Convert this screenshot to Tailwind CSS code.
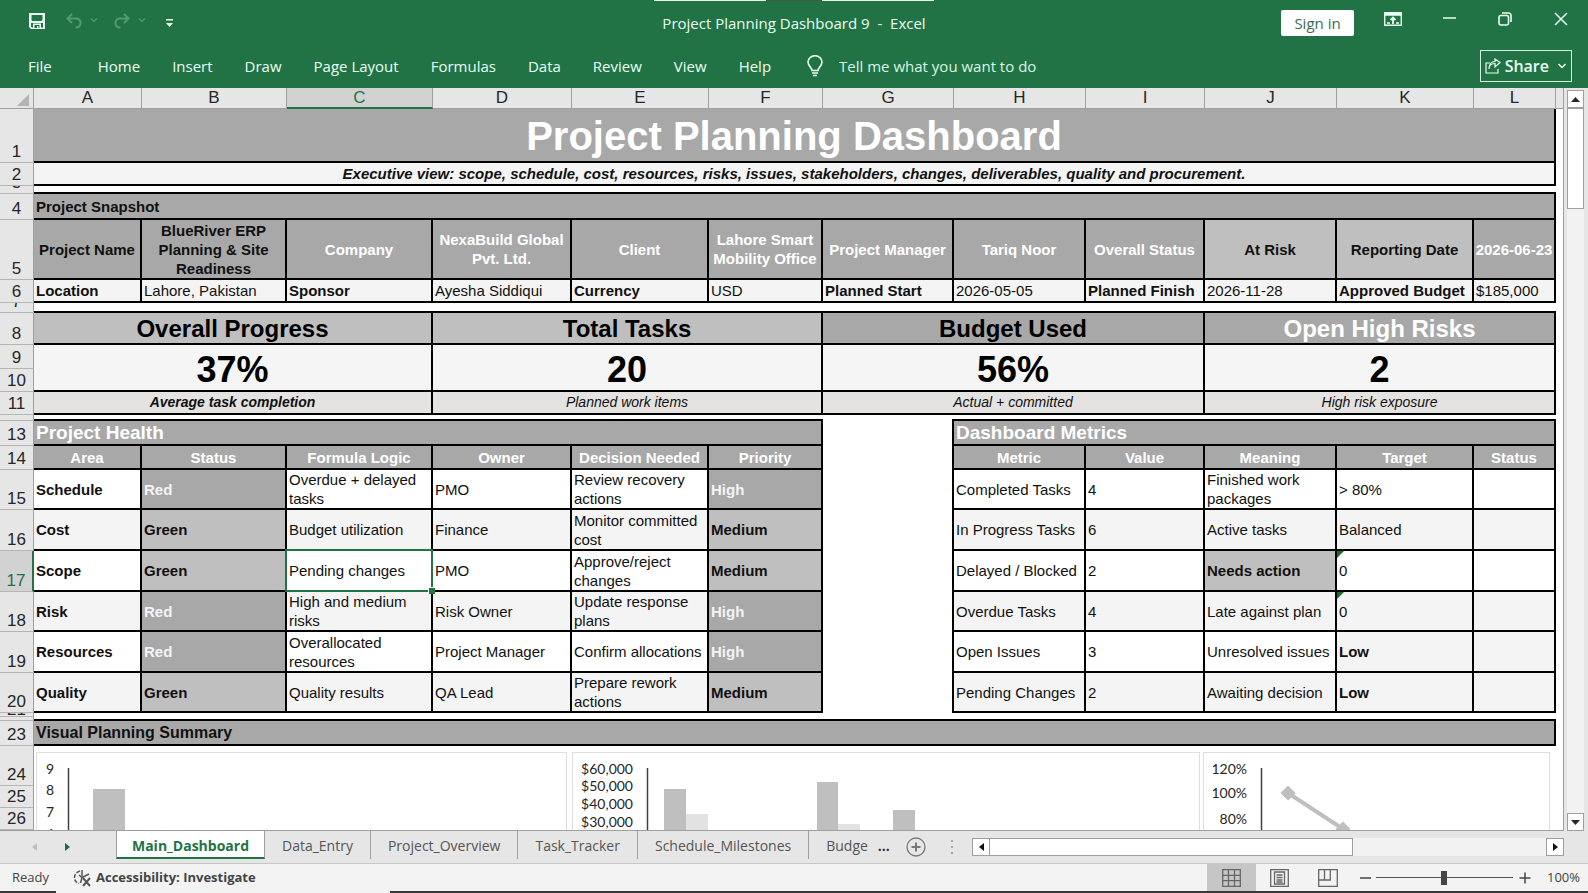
<!DOCTYPE html>
<html lang="en">
<head>
    <meta charset="UTF-8">
    <meta name="viewport" content="width=device-width, initial-scale=1.0">
    <title>Project Planning Dashboard 9 - Excel</title>
    <script src="https://cdn.jsdelivr.net/npm/@tailwindcss/browser@4"></script>
</head>
<body class="h-screen flex flex-col overflow-hidden bg-[#e6e6e6] font-['Open_Sans',sans-serif] text-[15px] text-[#262626]">

    <!-- Title bar + ribbon tabs -->
    <header class="relative shrink-0 bg-[#217346] text-[#e9fff2]">
        <div class="absolute top-0 left-1/2 -translate-x-1/2 flex h-px">
            <span class="w-28 bg-[#e9fff2]"></span>
            <span class="w-14 bg-[#3f5a4a]"></span>
            <span class="w-28 bg-[#e9fff2]"></span>
        </div>

        <div class="h-[46px] grid grid-cols-[1fr_auto_1fr] items-center">
            <div class="flex items-center pl-7">
                <button aria-label="Save" class="mr-5">
                    <svg class="w-[18px] h-[18px] -mt-1" viewBox="0 0 18 18" fill="currentColor" fill-rule="evenodd">
                        <path d="M1 1h16v16H3l-2-2zM3.500 3v5l1 1h9l1-1V3zM3 11v4l1 .5H5V11.500h8v4h2V11zM6.500 13v3h2.500v-2h1.500v2h1v-3z"/>
                    </svg>
                </button>
                <button aria-label="Undo" class="flex items-center gap-2 mr-4 text-[#4f9a70]">
                    <svg class="w-4 h-[18px] -mt-1" viewBox="0 0 16 18" fill="none" stroke="currentColor" stroke-width="2">
                        <path d="M6 2L1.500 6.500L6 11M2 6.500h7.500c3 0 5 1.800 5 4.500 0 2.500-1.800 4.500-5 4.500"/>
                    </svg>
                    <svg class="w-2 h-2 -mt-1.5" viewBox="0 0 8 8" fill="none" stroke="currentColor" stroke-width="1.300"><path d="M1 2.500l3 3 3-3"/></svg>
                </button>
                <button aria-label="Redo" class="flex items-center gap-2 mr-5 text-[#4f9a70]">
                    <svg class="w-4 h-[18px] -mt-1" viewBox="0 0 16 18" fill="none" stroke="currentColor" stroke-width="2">
                        <path d="M10 2l4.500 4.500L10 11M14 6.500H6.500c-3 0-5 1.800-5 4.500 0 2.500 1.800 4.500 5 4.500"/>
                    </svg>
                    <svg class="w-2 h-2 -mt-1.5" viewBox="0 0 8 8" fill="none" stroke="currentColor" stroke-width="1.300"><path d="M1 2.500l3 3 3-3"/></svg>
                </button>
                <button aria-label="Customize Quick Access Toolbar">
                    <svg class="w-[7px] h-2" viewBox="0 0 7 8" fill="currentColor"><path d="M0 0h7v1.500H0zM0 4h7L3.500 8z"/></svg>
                </button>
            </div>
            <h1 class="whitespace-pre">Project Planning Dashboard 9  -  Excel</h1>
            <div class="flex items-center justify-end pr-5">
                <button class="w-[73px] h-[26px] mr-[30px] rounded-xs bg-white text-[#3b6b53]">Sign in</button>
                <div class="flex items-center -mt-2">
                    <button aria-label="Ribbon Display Options" class="mr-[41px]">
                        <svg class="w-[18px] h-[14px]" viewBox="0 0 18 14" fill="none" stroke="currentColor" stroke-width="1.400">
                            <path d="M.7.7h16.600v12.600H.7zM.7 3h16.600"/>
                            <path d="M.7 2h16.600" stroke-width="2"/>
                            <path d="M9 12V5.500M6.500 8L9 5.500 11.500 8" stroke-width="1.800"/>
                            <path d="M3 11h3M12 11h3"/>
                        </svg>
                    </button>
                    <button aria-label="Minimize" class="mr-[42px]">
                        <svg class="w-[13px] h-[14px]" viewBox="0 0 13 14" stroke="currentColor" stroke-width="1.500"><path d="M0 6h13"/></svg>
                    </button>
                    <button aria-label="Restore" class="mr-[42px]">
                        <svg class="w-[14px] h-[14px]" viewBox="0 0 14 14" fill="none" stroke="currentColor" stroke-width="1.600">
                            <rect x="1" y="3.500" width="9.500" height="9.500" rx="2"/>
                            <path d="M4 1h6.500A2.500 2.500 0 0 1 13 3.500V10"/>
                        </svg>
                    </button>
                    <button aria-label="Close">
                        <svg class="w-[14px] h-[14px]" viewBox="0 0 14 14" stroke="currentColor" stroke-width="1.500"><path d="M1 1l12 12M13 1L1 13"/></svg>
                    </button>
                </div>
            </div>
        </div>

        <div class="h-[42px] flex items-center justify-between pl-7 pr-4 pb-0.5">
            <nav class="flex items-center gap-8">
                <button class="mr-3.5">File</button>
                <button>Home</button>
                <button>Insert</button>
                <button>Draw</button>
                <button>Page Layout</button>
                <button>Formulas</button>
                <button>Data</button>
                <button>Review</button>
                <button>View</button>
                <button>Help</button>
                <label class="flex items-center gap-4">
                    <svg class="ml-1 w-4 h-[22px]" viewBox="0 0 16 22" fill="none" stroke="currentColor" stroke-width="1.600">
                        <path d="M5 15.500c0-3-4-4.500-4-8.500a7 6.300 0 0 1 14 0c0 4-4 5.500-4 8.500z"/>
                        <path d="M5 18h6M6 20.500h4"/>
                    </svg>
                    <input type="text" aria-label="Tell me what you want to do" placeholder="Tell me what you want to do" class="w-56 outline-none placeholder:text-[#d8f5e4] placeholder:opacity-100">
                </label>
            </nav>
            <button class="flex items-center h-8 px-1 border border-[#d5f0e0] text-base font-semibold">
                <svg class="w-4 h-4" viewBox="0 0 16 16" fill="none" stroke="currentColor" stroke-width="1.200">
                    <path d="M5 5H1v10h12v-4"/>
                    <path d="M4 11c0-3.500 2.500-5.500 6-5.500V9l5-4.500L10 1v2.500C6 3.500 4 7 4 11z"/>
                </svg>
                <span class="mx-1">Share</span>
                <svg class="ml-1 w-2.5 h-2.5" viewBox="0 0 10 10" fill="none" stroke="currentColor" stroke-width="1.500"><path d="M1.500 3l3.500 3.500L8.500 3"/></svg>
            </button>
        </div>
    </header>

    <!-- Worksheet -->
    <main class="flex-1 min-h-0 flex overflow-hidden">
        <div class="flex-1 min-w-0 overflow-hidden border-r border-b border-[#9f9f9f] bg-white">
            <table class="w-full table-fixed border-separate border-spacing-0 font-['Liberation_Sans',Arial,sans-serif] leading-[19px] text-[#111] [&_th]:font-normal [&_th]:text-[17px] [&_th]:leading-5 [&_th]:text-[#262626] [&_th]:border-r [&_th]:border-b [&_tbody_th]:align-bottom [&_tbody_th]:border-[#b5b5b5] [&_tbody_th]:border-r-[#9f9f9f]">
                <colgroup>
                    <col class="w-[34px]">
                    <col class="w-[108px]">
                    <col class="w-[145px]">
                    <col class="w-[146px]">
                    <col class="w-[139px]">
                    <col class="w-[137px]">
                    <col class="w-[114px]">
                    <col class="w-[131px]">
                    <col class="w-[132px]">
                    <col class="w-[119px]">
                    <col class="w-[132px]">
                    <col class="w-[137px]">
                    <col class="w-[82px]">
                    <col>
                </colgroup>
                <thead class="bg-[#e6e6e6] [&_th]:border-[#9f9f9f] [&_th]:align-bottom">
                    <tr class="h-[21px]">
                        <th><svg class="ml-auto mr-1 mb-0.5 w-3 h-3" viewBox="0 0 12 12" fill="#b4b4b4"><path d="M12 0v12H0z"/></svg></th>
                        <th scope="col">A</th>
                        <th scope="col">B</th>
                        <th scope="col" class="bg-[#d2d2d2] text-[#217346]! border-b-2! border-b-[#217346]!"><div class="-mb-px">C</div></th>
                        <th scope="col">D</th>
                        <th scope="col">E</th>
                        <th scope="col">F</th>
                        <th scope="col">G</th>
                        <th scope="col">H</th>
                        <th scope="col">I</th>
                        <th scope="col">J</th>
                        <th scope="col">K</th>
                        <th scope="col">L</th>
                        <th class="border-r-0!"></th>
                    </tr>
                </thead>

                <tbody class="[&_th]:bg-[#e6e6e6] [&_td]:border-r-2 [&_td]:border-b-2 [&_td]:border-black text-center">
                    <tr class="h-[54px]">
                        <th scope="row">1</th>
                        <td colspan="12" class="pt-0.5 bg-[#a8a8a8] text-white text-[40px] leading-10 font-bold">Project Planning Dashboard</td>
                    </tr>
                    <tr class="h-[23px]">
                        <th scope="row">2</th>
                        <td colspan="12" class="bg-[#f4f4f4] font-bold italic">Executive view: scope, schedule, cost, resources, risks, issues, stakeholders, changes, deliverables, quality and procurement.</td>
                    </tr>
                </tbody>
                <tbody class="[&_th]:bg-[#e6e6e6]">
                    <tr class="h-2">
                        <th scope="row"><div class="h-[7px] flex items-end justify-center overflow-hidden">3</div></th>
                        <td colspan="12" class="border-b-2 border-black"></td>
                    </tr>
                </tbody>

                <!-- Project snapshot -->
                <tbody class="[&_th]:bg-[#e6e6e6] [&_td]:border-r-2 [&_td]:border-b-2 [&_td]:border-black [&_td]:px-0.5">
                    <tr class="h-[26px]">
                        <th scope="row">4</th>
                        <td colspan="12" class="bg-[#a8a8a8] font-bold">Project Snapshot</td>
                    </tr>
                    <tr class="h-[60px] text-center font-bold text-white">
                        <th scope="row">5</th>
                        <td class="bg-[#a8a8a8] text-[#111]">Project Name</td>
                        <td class="bg-[#a8a8a8] text-[#111]">BlueRiver ERP Planning &amp; Site Readiness</td>
                        <td class="bg-[#a8a8a8]">Company</td>
                        <td class="bg-[#a8a8a8]">NexaBuild Global Pvt. Ltd.</td>
                        <td class="bg-[#a8a8a8]">Client</td>
                        <td class="bg-[#a8a8a8]">Lahore Smart Mobility Office</td>
                        <td class="bg-[#a8a8a8]">Project Manager</td>
                        <td class="bg-[#a8a8a8]">Tariq Noor</td>
                        <td class="bg-[#a8a8a8]">Overall Status</td>
                        <td class="bg-[#bfbfbf] text-[#111]">At Risk</td>
                        <td class="bg-[#bfbfbf] text-[#111]">Reporting Date</td>
                        <td class="px-0! bg-[#a8a8a8]">2026-06-23</td>
                    </tr>
                    <tr class="h-[23px]">
                        <th scope="row">6</th>
                        <td class="bg-[#f4f4f4] font-bold">Location</td>
                        <td class="bg-[#f4f4f4]">Lahore, Pakistan</td>
                        <td class="bg-[#f4f4f4] font-bold">Sponsor</td>
                        <td class="bg-[#f4f4f4]">Ayesha Siddiqui</td>
                        <td class="bg-[#f4f4f4] font-bold">Currency</td>
                        <td class="bg-[#f4f4f4]">USD</td>
                        <td class="bg-[#f4f4f4] font-bold">Planned Start</td>
                        <td class="bg-[#f4f4f4]">2026-05-05</td>
                        <td class="bg-[#f4f4f4] font-bold">Planned Finish</td>
                        <td class="bg-[#f4f4f4]">2026-11-28</td>
                        <td class="bg-[#f4f4f4] font-bold">Approved Budget</td>
                        <td class="bg-[#f4f4f4]">$185,000</td>
                    </tr>
                </tbody>
                <tbody class="[&_th]:bg-[#e6e6e6]">
                    <tr class="h-[10px]">
                        <th scope="row"><div class="h-[9px] flex items-end justify-center overflow-hidden">7</div></th>
                        <td colspan="12" class="border-b-2 border-black"></td>
                    </tr>
                </tbody>

                <!-- KPI blocks -->
                <tbody class="[&_th]:bg-[#e6e6e6] [&_td]:border-r-2 [&_td]:border-b-2 [&_td]:border-black text-center">
                    <tr class="h-8 text-2xl leading-[29px] font-bold text-black">
                        <th scope="row">8</th>
                        <td colspan="3" class="bg-[#bfbfbf]">Overall Progress</td>
                        <td colspan="3" class="bg-[#bfbfbf]">Total Tasks</td>
                        <td colspan="3" class="bg-[#a8a8a8]">Budget Used</td>
                        <td colspan="3" class="bg-[#a8a8a8] text-white">Open High Risks</td>
                    </tr>
                    <tr class="h-6 text-4xl leading-10 font-bold text-black [&_td]:pt-1">
                        <th scope="row">9</th>
                        <td colspan="3" rowspan="2" class="bg-[#f5f5f5]">37%</td>
                        <td colspan="3" rowspan="2" class="bg-[#f5f5f5]">20</td>
                        <td colspan="3" rowspan="2" class="bg-[#f5f5f5]">56%</td>
                        <td colspan="3" rowspan="2" class="bg-[#f5f5f5]">2</td>
                    </tr>
                    <tr class="h-[23px]">
                        <th scope="row">10</th>
                    </tr>
                    <tr class="h-[23px] text-sm leading-[19px] italic">
                        <th scope="row" class="not-italic">11</th>
                        <td colspan="3" class="bg-[#e4e3e2] font-bold">Average task completion</td>
                        <td colspan="3" class="bg-[#e4e3e2]">Planned work items</td>
                        <td colspan="3" class="bg-[#e4e3e2]">Actual + committed</td>
                        <td colspan="3" class="bg-[#e4e3e2]">High risk exposure</td>
                    </tr>
                </tbody>
                <tbody class="[&_th]:bg-[#e6e6e6]">
                    <tr class="h-1.5">
                        <th></th>
                        <td colspan="6" class="border-b-2 border-black"></td>
                        <td class="relative"><div class="absolute right-0 bottom-0 size-0.5 bg-black"></div></td>
                        <td colspan="5" class="border-b-2 border-black"></td>
                    </tr>
                </tbody>

                <!-- Project health (A-F) and dashboard metrics (H-L) -->
                <tbody class="[&_th]:bg-[#e6e6e6] [&_td]:border-r-2 [&_td]:border-b-2 [&_td]:border-black [&_td]:px-0.5">
                    <tr class="h-[25px] text-[19px] leading-5 font-bold text-white">
                        <th scope="row">13</th>
                        <td colspan="6" class="bg-[#a8a8a8]">Project Health</td>
                        <td rowspan="8" class="border-b-0! bg-white"></td>
                        <td colspan="5" class="bg-[#a8a8a8]">Dashboard Metrics</td>
                    </tr>
                    <tr class="h-6 text-center font-bold text-white">
                        <th scope="row">14</th>
                        <td class="bg-[#a8a8a8]">Area</td>
                        <td class="bg-[#a8a8a8]">Status</td>
                        <td class="bg-[#a8a8a8]">Formula Logic</td>
                        <td class="bg-[#a8a8a8]">Owner</td>
                        <td class="bg-[#a8a8a8]">Decision Needed</td>
                        <td class="bg-[#a8a8a8]">Priority</td>
                        <td class="bg-[#a8a8a8]">Metric</td>
                        <td class="bg-[#a8a8a8]">Value</td>
                        <td class="bg-[#a8a8a8]">Meaning</td>
                        <td class="bg-[#a8a8a8]">Target</td>
                        <td class="bg-[#a8a8a8]">Status</td>
                    </tr>
                    <tr class="h-10">
                        <th scope="row">15</th>
                        <td class="font-bold">Schedule</td>
                        <td class="bg-[#a8a8a8] font-bold text-[#f4f4f4]">Red</td>
                        <td>Overdue + delayed tasks</td>
                        <td>PMO</td>
                        <td>Review recovery actions</td>
                        <td class="bg-[#a8a8a8] font-bold text-[#f4f4f4]">High</td>
                        <td>Completed Tasks</td>
                        <td>4</td>
                        <td>Finished work packages</td>
                        <td>&gt; 80%</td>
                        <td></td>
                    </tr>
                    <tr class="h-[41px]">
                        <th scope="row">16</th>
                        <td class="bg-[#f4f4f4] font-bold">Cost</td>
                        <td class="bg-[#bfbfbf] font-bold">Green</td>
                        <td class="bg-[#f4f4f4]">Budget utilization</td>
                        <td class="bg-[#f4f4f4]">Finance</td>
                        <td class="bg-[#f4f4f4]">Monitor committed cost</td>
                        <td class="bg-[#bfbfbf] font-bold">Medium</td>
                        <td class="bg-[#f4f4f4]">In Progress Tasks</td>
                        <td class="bg-[#f4f4f4]">6</td>
                        <td class="bg-[#f4f4f4]">Active tasks</td>
                        <td class="bg-[#f4f4f4]">Balanced</td>
                        <td class="bg-[#f4f4f4]"></td>
                    </tr>
                    <tr class="h-[41px]">
                        <th scope="row" class="bg-[#d2d2d2]! text-[#217346]! border-r-2! border-r-[#217346]!">17</th>
                        <td class="font-bold">Scope</td>
                        <td class="bg-[#bfbfbf] font-bold">Green</td>
                        <td class="relative">
                            Pending changes
                            <div class="absolute -inset-0.5 border-2 border-[#217346]"></div>
                            <div class="absolute -right-1 -bottom-1 size-[7px] border-t border-l border-white bg-[#217346]"></div>
                        </td>
                        <td>PMO</td>
                        <td>Approve/reject changes</td>
                        <td class="bg-[#bfbfbf] font-bold">Medium</td>
                        <td>Delayed / Blocked</td>
                        <td>2</td>
                        <td class="bg-[#bfbfbf] font-bold">Needs action</td>
                        <td class="relative">
                            <svg class="absolute top-0 left-0 w-[7px] h-[7px]" viewBox="0 0 7 7" fill="#1e6b2c"><path d="M0 0h7L0 7z"/></svg>
                            0
                        </td>
                        <td></td>
                    </tr>
                    <tr class="h-10">
                        <th scope="row">18</th>
                        <td class="bg-[#f4f4f4] font-bold">Risk</td>
                        <td class="bg-[#a8a8a8] font-bold text-[#f4f4f4]">Red</td>
                        <td class="bg-[#f4f4f4]">High and medium risks</td>
                        <td class="bg-[#f4f4f4]">Risk Owner</td>
                        <td class="bg-[#f4f4f4]">Update response plans</td>
                        <td class="bg-[#a8a8a8] font-bold text-[#f4f4f4]">High</td>
                        <td class="bg-[#f4f4f4]">Overdue Tasks</td>
                        <td class="bg-[#f4f4f4]">4</td>
                        <td class="bg-[#f4f4f4]">Late against plan</td>
                        <td class="relative bg-[#f4f4f4]">
                            <svg class="absolute top-0 left-0 w-[7px] h-[7px]" viewBox="0 0 7 7" fill="#1e6b2c"><path d="M0 0h7L0 7z"/></svg>
                            0
                        </td>
                        <td class="bg-[#f4f4f4]"></td>
                    </tr>
                    <tr class="h-[41px]">
                        <th scope="row">19</th>
                        <td class="font-bold">Resources</td>
                        <td class="bg-[#a8a8a8] font-bold text-[#f4f4f4]">Red</td>
                        <td>Overallocated resources</td>
                        <td>Project Manager</td>
                        <td>Confirm allocations</td>
                        <td class="bg-[#a8a8a8] font-bold text-[#f4f4f4]">High</td>
                        <td>Open Issues</td>
                        <td>3</td>
                        <td>Unresolved issues</td>
                        <td class="bg-[#f4f4f4] font-bold">Low</td>
                        <td class="bg-[#f4f4f4]"></td>
                    </tr>
                    <tr class="h-10">
                        <th scope="row">20</th>
                        <td class="bg-[#f4f4f4] font-bold">Quality</td>
                        <td class="bg-[#bfbfbf] font-bold">Green</td>
                        <td class="bg-[#f4f4f4]">Quality results</td>
                        <td class="bg-[#f4f4f4]">QA Lead</td>
                        <td class="bg-[#f4f4f4]">Prepare rework actions</td>
                        <td class="bg-[#bfbfbf] font-bold">Medium</td>
                        <td class="bg-[#f4f4f4]">Pending Changes</td>
                        <td class="bg-[#f4f4f4]">2</td>
                        <td class="bg-[#f4f4f4]">Awaiting decision</td>
                        <td class="bg-[#f4f4f4] font-bold">Low</td>
                        <td class="bg-[#f4f4f4]"></td>
                    </tr>
                </tbody>
                <tbody class="[&_th]:bg-[#e6e6e6]">
                    <tr class="h-1">
                        <th scope="row"><div class="h-[3px] flex items-end justify-center overflow-hidden leading-3">21</div></th>
                        <td colspan="12"></td>
                    </tr>
                    <tr class="h-1">
                        <th></th>
                        <td colspan="12" class="border-b-2 border-black"></td>
                    </tr>
                </tbody>

                <!-- Charts -->
                <tbody class="[&_th]:bg-[#e6e6e6]">
                    <tr class="h-[25px]">
                        <th scope="row">23</th>
                        <td colspan="12" class="px-0.5 border-r-2 border-b-2 border-black bg-[#a8a8a8] text-base leading-[19px] font-bold">Visual Planning Summary</td>
                    </tr>
                    <tr class="h-10">
                        <th scope="row">24</th>
                        <td colspan="12" rowspan="3" class="align-top">
                            <div class="flex h-[84px] pt-1.5 pl-0.5 pr-1.5 overflow-hidden font-['Lato',sans-serif] text-sm">
                                <svg class="h-28 mr-[5px] grow-[531] basis-0 border border-[#dedede]" fill="#262626" text-anchor="middle">
                                    <text x="13" y="21">9</text>
                                    <text x="13" y="42">8</text>
                                    <text x="13" y="64">7</text>
                                    <text x="13" y="86">6</text>
                                    <path d="M31.500 15v100" stroke="#404040" stroke-width="1.500"/>
                                    <rect x="56" y="36" width="32" height="90" fill="#bfbfbf"/>
                                </svg>
                                <svg class="h-28 mr-[3px] grow-[629] basis-0 border border-[#dedede]" fill="#262626" text-anchor="end">
                                    <text x="60" y="21">$60,000</text>
                                    <text x="60" y="38">$50,000</text>
                                    <text x="60" y="56">$40,000</text>
                                    <text x="60" y="74">$30,000</text>
                                    <path d="M74.500 15v100" stroke="#404040" stroke-width="1.500"/>
                                    <path d="M91 36h22v90H91zM244 29h21v90h-21zM320 57h22v60h-22z" fill="#bfbfbf"/>
                                    <path d="M113 61h22v60h-22zM265 71h22v60h-22z" fill="#e2e2e2"/>
                                </svg>
                                <svg class="h-28 grow-[347] basis-0 border border-[#dedede]" fill="#262626" text-anchor="end">
                                    <text x="43" y="21">120%</text>
                                    <text x="43" y="45">100%</text>
                                    <text x="43" y="71">80%</text>
                                    <path d="M57.500 15v100" stroke="#404040" stroke-width="1.500"/>
                                    <path d="M84 40l55 36" stroke="#bfbfbf" stroke-width="4"/>
                                    <path d="M84 32.500l7.500 7.500-7.500 7.500-7.500-7.500zM139 68.500l7.500 7.500-7.500 7.500-7.500-7.500z" fill="#bfbfbf"/>
                                </svg>
                            </div>
                        </td>
                    </tr>
                    <tr class="h-[22px]">
                        <th scope="row">25</th>
                    </tr>
                    <tr class="h-[22px]">
                        <th scope="row">26</th>
                    </tr>
                </tbody>
            </table>
        </div>

        <!-- Vertical scroll bar -->
        <div class="w-6 shrink-0 flex flex-col pt-0.5 pl-[3px] pr-1">
            <button aria-label="Scroll up" class="h-[18px] grid place-items-center border border-[#9f9f9f] bg-white">
                <svg class="w-[9px] h-[5px]" viewBox="0 0 9 5" fill="#262626"><path d="M4.500 0L9 5H0z"/></svg>
            </button>
            <div class="flex-1 bg-[#f2f2f2]">
                <div class="h-[101px] border border-[#9f9f9f] bg-white"></div>
            </div>
            <button aria-label="Scroll down" class="h-[18px] grid place-items-center border border-[#9f9f9f] bg-white">
                <svg class="w-[9px] h-[5px]" viewBox="0 0 9 5" fill="#262626"><path d="M0 0h9L4.500 5z"/></svg>
            </button>
        </div>
    </main>

    <!-- Sheet tabs -->
    <div class="h-8 shrink-0 flex items-start text-sm text-[#555]">
        <div class="w-[116px] h-[31px] flex items-center pl-8 gap-7">
            <button aria-label="Previous sheets"><svg class="w-[5px] h-2" viewBox="0 0 5 8" fill="#c0c0c0"><path d="M5 0v8L0 4z"/></svg></button>
            <button aria-label="Next sheets"><svg class="w-[5px] h-2" viewBox="0 0 5 8" fill="#1d6b40"><path d="M0 0v8l5-4z"/></svg></button>
        </div>
        <button class="h-7 w-[149px] pt-1 border-x border-b-2 border-x-[#9f9f9f] border-b-[#217346] bg-white font-bold text-[#217346]">Main_Dashboard</button>
        <button class="h-7 px-[17px] pt-0.5 border-r border-[#9f9f9f]">Data_Entry</button>
        <button class="h-7 px-[17px] pt-0.5 border-r border-[#9f9f9f]">Project_Overview</button>
        <button class="h-7 px-[17px] pt-0.5 border-r border-[#9f9f9f]">Task_Tracker</button>
        <button class="h-7 px-[17px] pt-0.5 border-r border-[#9f9f9f]">Schedule_Milestones</button>
        <button class="h-7 pl-[17px] pt-0.5">Budge</button>
        <button aria-label="More sheets" class="h-7 pl-2.5 pt-0.5 font-bold text-[#333]">...</button>
        <button aria-label="New sheet" class="h-[31px] ml-4">
            <svg class="w-5 h-5" viewBox="0 0 20 20" fill="none" stroke="#777"><circle cx="10" cy="10" r="9" stroke-width="1.300"/><path d="M10 5.500v9M5.500 10h9" stroke-width="2"/></svg>
        </button>
        <svg class="mt-2 ml-auto mr-[18px] w-[3px] h-4" viewBox="0 0 3 16" fill="#a8a8a8"><path d="M0 1h2v2H0zM0 7h2v2H0zM0 13h2v2H0z"/></svg>
        <div class="flex w-[592px] h-[18px] mt-[7px] mr-6 bg-[#f2f2f2]">
            <button aria-label="Scroll left" class="w-[18px] grid place-items-center border border-[#9f9f9f] bg-white">
                <svg class="w-[5px] h-2" viewBox="0 0 5 8" fill="#111"><path d="M5 0v8L0 4z"/></svg>
            </button>
            <div class="w-[363px] border border-l-0 border-[#9f9f9f] bg-white"></div>
            <button aria-label="Scroll right" class="w-[18px] ml-auto grid place-items-center border border-[#9f9f9f] bg-white">
                <svg class="w-[5px] h-2" viewBox="0 0 5 8" fill="#111"><path d="M0 0v8l5-4z"/></svg>
            </button>
        </div>
    </div>

    <!-- Status bar -->
    <footer class="h-7 shrink-0 flex items-center border-t border-[#c6c6c6] bg-[#f3f3f3] pl-3 pr-2 text-[13px] text-[#444]">
        <span>Ready</span>
        <button class="flex items-center gap-1 ml-6 font-bold">
            <svg class="w-[19px] h-[18px]" viewBox="0 0 19 18" fill="none" stroke="#555" stroke-width="1.500">
                <path d="M7 2C3.500 3 1.500 5.500 1.500 8.500S3 13.500 6 14.500" stroke-dasharray="4 1.500"/>
                <path d="M9 1v6M6 6l3 2.500 7-3.500M9 8.500L7.500 14"/>
                <path d="M10 9l7 8M17 9l-7 8" stroke-width="1.900"/>
            </svg>
            Accessibility: Investigate
        </button>
        <div class="ml-auto flex h-full items-center">
            <button aria-label="Normal view" class="w-[49px] h-full grid place-items-center bg-[#c6c6c6]">
                <svg class="w-[19px] h-[18px]" viewBox="0 0 19 18" fill="none" stroke="#666" stroke-width="1.300"><path d="M.7.7h17.600v16.600H.7zM.7 6.300h17.600M.7 11.700h17.600M6.500.7v16.600M12.500.7v16.600"/></svg>
            </button>
            <button aria-label="Page layout view" class="w-12 h-full grid place-items-center">
                <svg class="w-[19px] h-[18px]" viewBox="0 0 19 18" fill="none" stroke="#666" stroke-width="1.300"><path d="M.7.7h17.600v16.600H.7zM4.500 3h10v12h-10zM6.500 6h6M6.500 8.500h6M6.500 11h6M6.500 13h6"/></svg>
            </button>
            <button aria-label="Page break preview" class="w-12 h-full grid place-items-center">
                <svg class="w-5 h-[18px]" viewBox="0 0 20 18" fill="none" stroke="#666" stroke-width="1.300"><path d="M.7.7h18.600v16.600H.7zM.7 11h11.600V.7M6.500.7V11"/></svg>
            </button>
            <button aria-label="Zoom out" class="ml-2">
                <svg class="w-3 h-3" viewBox="0 0 12 12" stroke="#444" stroke-width="1.500"><path d="M0 6h11"/></svg>
            </button>
            <input type="range" min="10" max="190" value="100" aria-label="Zoom" class="w-[137px] mx-1 h-4 appearance-none bg-transparent bg-[linear-gradient(#555,#555)] bg-no-repeat bg-center bg-[length:100%_1px] [&::-webkit-slider-thumb]:appearance-none [&::-webkit-slider-thumb]:w-1.5 [&::-webkit-slider-thumb]:h-3.5 [&::-webkit-slider-thumb]:bg-[#444]">
            <button aria-label="Zoom in" class="ml-0.5 mr-4">
                <svg class="w-3 h-3" viewBox="0 0 12 12" stroke="#444" stroke-width="1.500"><path d="M.5 6h11M6 .5v11"/></svg>
            </button>
            <button>100%</button>
        </div>
    </footer>
    <div class="h-0.5 shrink-0 flex bg-[#3b3738]">
        <span class="ml-14 w-[334px] bg-[#f3f3f3]"></span>
    </div>
</body>
</html>
